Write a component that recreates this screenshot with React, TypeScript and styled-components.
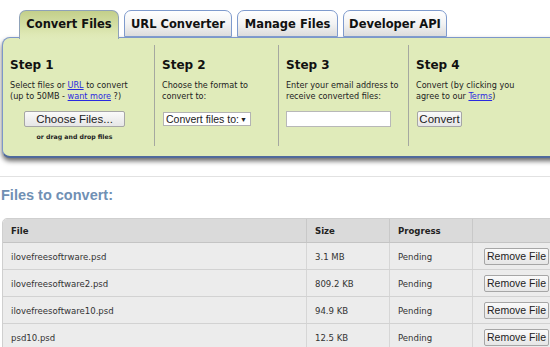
import React from "react";
import styled, { createGlobalStyle } from "styled-components";

const GlobalStyle = createGlobalStyle`
  html, body {
    margin: 0;
    padding: 0;
    background: #fff;
    overflow: hidden;
  }
  body {
    width: 550px;
    height: 347px;
    font-family: "DejaVu Sans", Verdana, sans-serif;
    color: #222;
  }
`;

const tabs = ["Convert Files", "URL Converter", "Manage Files", "Developer API"];

const files = [
  { name: "ilovefreesoftrware.psd", size: "3.1 MB" },
  { name: "ilovefreesoftware2.psd", size: "809.2 KB" },
  { name: "ilovefreesoftware10.psd", size: "94.9 KB" },
  { name: "psd10.psd", size: "12.5 KB" },
];

export default function App() {
  return (
    <Page>
      <GlobalStyle />
      <TabBar>
        {tabs.map((t, i) => (
          <Tab key={t} $active={i === 0}>{t}</Tab>
        ))}
      </TabBar>
      <Panel>
        <Step>
          <StepTitle>Step 1</StepTitle>
          <StepText>
            Select files or <Link>URL</Link> to convert<br />
            (up to 50MB - <Link>want more</Link> ?)
          </StepText>
          <Centered>
            <ChooseButton>Choose Files...</ChooseButton>
            <DropHint>or drag and drop files</DropHint>
          </Centered>
        </Step>
        <Step $divider>
          <StepTitle>Step 2</StepTitle>
          <StepText>
            Choose the format to<br />convert to:
          </StepText>
          <FakeSelect>
            <span>Convert files to:</span>
            <Arrow>▼</Arrow>
          </FakeSelect>
        </Step>
        <Step $divider>
          <StepTitle>Step 3</StepTitle>
          <StepText>
            Enter your email address to<br />receive converted files:
          </StepText>
          <EmailInput type="text" />
        </Step>
        <Step $divider>
          <StepTitle>Step 4</StepTitle>
          <StepText>
            Convert (by clicking you<br />agree to our <Link>Terms</Link>)
          </StepText>
          <ConvertButton>Convert</ConvertButton>
        </Step>
      </Panel>
      <Rule />
      <Heading>Files to convert:</Heading>
      <Table>
        <HeadRow>
          <HeadCell>File</HeadCell>
          <HeadCell>Size</HeadCell>
          <HeadCell>Progress</HeadCell>
          <HeadCell />
        </HeadRow>
        {files.map((f) => (
          <Row key={f.name}>
            <Cell>{f.name}</Cell>
            <Cell>{f.size}</Cell>
            <Cell>Pending</Cell>
            <ButtonCell>
              <RemoveButton>Remove File</RemoveButton>
            </ButtonCell>
          </Row>
        ))}
      </Table>
    </Page>
  );
}

const Page = styled.div`
  width: 550px;
  height: 347px;
  overflow: hidden;
`;

const TabBar = styled.div`
  display: flex;
  gap: 5px;
  padding: 10px 0 0 19px;
  height: 27px;
  position: relative;
  z-index: 2;
`;

const Tab = styled.div<{ $active?: boolean }>`
  box-sizing: border-box;
  height: ${(p) => (p.$active ? "29px" : "27px")};
  display: flex;
  align-items: center;
  justify-content: center;
  white-space: nowrap;
  font-size: 11.5px;
  font-weight: bold;
  color: #111;
  border: 1px solid ${(p) => (p.$active ? "#8fa2b8" : "#7f9bcd")};
  border-bottom: ${(p) => (p.$active ? "none" : "1px solid #7f9bcd")};
  border-radius: 7px 7px 0 0;
  background: ${(p) =>
    p.$active
      ? "linear-gradient(#c3cf8a, #dfe9b6 85%, #e0ebba)"
      : "linear-gradient(#ffffff, #f3f3f3 50%, #dcdcdc)"};
  padding-bottom: ${(p) => (p.$active ? "2px" : "0")};
  &:nth-child(1) { width: 100px; }
  &:nth-child(2) { width: 108px; }
  &:nth-child(3) { width: 101px; }
  &:nth-child(4) { width: 104px; }
`;

const Panel = styled.div`
  box-sizing: border-box;
  margin-left: 2px;
  width: 560px;
  height: 121px;
  background: #e0ebba;
  border: 1px solid #7d97c9;
  border-bottom: 2px solid #4f6a9c;
  border-radius: 8px 0 0 8px;
  box-shadow: 0 3px 5px rgba(0, 0, 0, 0.6);
  display: grid;
  grid-template-columns: 151px 124px 130px 1fr;
  padding: 7px 0 10px;
`;

const Step = styled.div<{ $divider?: boolean }>`
  padding: 12px 0 0 7px;
  border-left: ${(p) => (p.$divider ? "1px solid #a5a8a0" : "none")};
  display: flex;
  flex-direction: column;
  align-items: flex-start;
`;

const StepTitle = styled.div`
  font-size: 12px;
  font-weight: bold;
  color: #111;
  line-height: 17px;
  margin-bottom: 6px;
`;

const StepText = styled.div`
  font-family: "DejaVu Sans Condensed", "DejaVu Sans", sans-serif;
  font-size: 9px;
  line-height: 11px;
  color: #222;
  white-space: nowrap;
  margin-bottom: 9px;
`;

const Link = styled.span`
  color: #2a2ae0;
  text-decoration: underline;
`;

const Centered = styled.div`
  align-self: stretch;
  display: flex;
  flex-direction: column;
  align-items: center;
  padding-right: 15px;
`;

const buttonBase = `
  box-sizing: border-box;
  font-family: "Liberation Sans", Arial, sans-serif;
  font-size: 11.5px;
  color: #222;
  border: 1px solid #a6a6a6;
  border-radius: 2px;
  background: linear-gradient(#fafafa, #e6e6e6);
  display: flex;
  align-items: center;
  justify-content: center;
  white-space: nowrap;
  padding: 0;
`;

const ChooseButton = styled.button`
  ${buttonBase}
  width: 101px;
  height: 16px;
`;

const DropHint = styled.div`
  font-size: 6.2px;
  font-weight: bold;
  color: #222;
  margin-top: 6px;
  white-space: nowrap;
`;

const FakeSelect = styled.div`
  box-sizing: border-box;
  width: 88px;
  height: 14px;
  margin-left: 1px;
  background: #fff;
  border: 1px solid #b3b3b3;
  display: flex;
  align-items: center;
  justify-content: space-between;
  padding: 0 3px 0 2px;
  font-family: "Liberation Sans", Arial, sans-serif;
  font-size: 10.5px;
  white-space: nowrap;
  color: #222;
  margin-top: 1px;
`;

const Arrow = styled.span`
  font-size: 7px;
`;

const EmailInput = styled.input`
  box-sizing: border-box;
  width: 105px;
  height: 16px;
  margin: 0;
  border: 1px solid #b8b8b8;
  background: #fff;
`;

const ConvertButton = styled.button`
  ${buttonBase}
  width: 45px;
  height: 16px;
  margin-left: 1px;
`;

const Rule = styled.div`
  margin-top: 18px;
  height: 1px;
  background: #e2e2e2;
`;

const Heading = styled.div`
  font-family: "Liberation Sans", Arial, sans-serif;
  font-weight: bold;
  font-size: 14.5px;
  color: #7090b4;
  padding: 10px 0 0 1px;
  height: 31px;
  box-sizing: border-box;
  margin-bottom: 10px;
`;

const Table = styled.div`
  margin-left: 2px;
  width: 570px;
  border: 1px solid #cfcfcf;
  border-radius: 5px 0 0 0;
  overflow: hidden;
  font-family: "DejaVu Sans Condensed", "DejaVu Sans", sans-serif;
  font-size: 9.5px;
`;

const grid = `
  display: grid;
  grid-template-columns: 303px 83px 83px 1fr;
`;

const HeadRow = styled.div`
  ${grid}
  height: 23px;
  background: #dadada;
  border-bottom: 1px solid #c4c4c4;
`;

const HeadCell = styled.div`
  display: flex;
  align-items: center;
  padding-left: 8px;
  font-weight: bold;
  color: #222;
  & + & { border-left: 1px solid #c8c8c8; }
`;

const Row = styled.div`
  ${grid}
  height: 26px;
  background: #ececec;
  border-bottom: 1px solid #d2d2d2;
`;

const Cell = styled.div`
  display: flex;
  align-items: center;
  padding-left: 8px;
  color: #333;
  white-space: nowrap;
  & + & { border-left: 1px solid #d6d6d6; }
`;

const ButtonCell = styled(Cell)`
  padding-left: 11px;
`;

const RemoveButton = styled.button`
  ${buttonBase}
  width: 65px;
  height: 17px;
  font-size: 10.5px;
`;
